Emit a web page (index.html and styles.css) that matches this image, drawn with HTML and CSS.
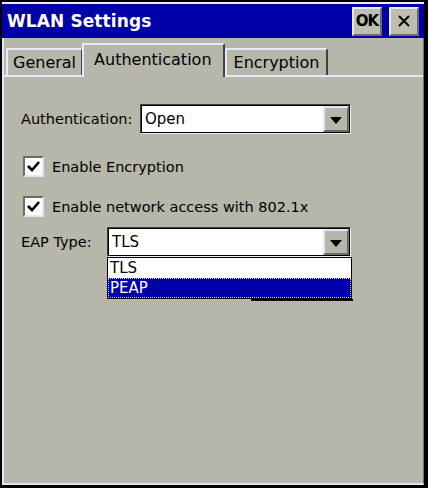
FILE: index.html
```html
<!DOCTYPE html>
<html>
<head>
<meta charset="utf-8">
<link rel="stylesheet" href="styles.css">
</head>
<body>
<div class="window">
  <div class="titlebar">
    <span class="title">WLAN Settings</span>
    <div class="tb-buttons">
      <div class="tb-btn ok">OK</div>
      <div class="tb-btn close">
        <svg width="12" height="12" viewBox="0 0 12 12"><path d="M1 1 L11 11 M11 1 L1 11" stroke="#000" stroke-width="2" fill="none"/></svg>
      </div>
    </div>
  </div>
  <div class="client">
    <div class="tabs">
      <div class="tab general">General</div>
      <div class="tab active">Authentication</div>
      <div class="tab">Encryption</div>
    </div>
    <div class="page">
      <div class="row auth-row">
        <span class="label auth-label">Authentication:</span>
        <div class="combo auth-combo">
          <div class="combo-inner">
            <span class="value">Open</span>
            <span class="drop"><svg width="12" height="7" viewBox="0 0 12 7"><path d="M0 0 H12 L6 7 Z" fill="#000"/></svg></span>
          </div>
        </div>
      </div>
      <div class="check-row first">
        <span class="checkbox"><svg width="17" height="17" viewBox="0 0 17 17"><path d="M3 8 L7 12 L14 4" stroke="#000" stroke-width="2.6" fill="none"/></svg></span>
        <span class="check-text">Enable Encryption</span>
      </div>
      <div class="check-row second">
        <span class="checkbox"><svg width="17" height="17" viewBox="0 0 17 17"><path d="M3 8 L7 12 L14 4" stroke="#000" stroke-width="2.6" fill="none"/></svg></span>
        <span class="check-text">Enable network access with 802.1x</span>
      </div>
      <div class="row eap-row">
        <span class="label eap-label">EAP Type:</span>
        <div class="combo eap-combo">
          <div class="combo-inner">
            <span class="value">TLS</span>
            <span class="drop"><svg width="12" height="7" viewBox="0 0 12 7"><path d="M0 0 H12 L6 7 Z" fill="#000"/></svg></span>
          </div>
          <div class="list">
            <div class="item">TLS</div>
            <div class="item sel">PEAP</div>
          </div>
          <div class="hidden-edge"></div>
        </div>
      </div>
    </div>
  </div>
</div>
</body>
</html>
```
FILE: styles.css
```css
html, body {
  margin: 0;
  padding: 0;
  background: #000;
}
body {
  font-family: "DejaVu Sans", "Liberation Sans", sans-serif;
  color: #000;
}
.window {
  width: 428px;
  height: 488px;
  box-sizing: border-box;
  border-style: solid;
  border-color: #000;
  border-width: 2px 4px 3px 2px;
  display: flex;
  flex-direction: column;
  background: #b6b6aa;
}
.titlebar {
  flex: none;
  height: 34px;
  border-top: 2px solid #ececf4;
  background: #0000a8;
  display: flex;
  align-items: center;
  justify-content: space-between;
  padding: 0 5px 0 5px;
}
.title {
  color: #fff;
  font-weight: bold;
  font-size: 17px;
  letter-spacing: 0.1px;
}
.tb-buttons {
  display: flex;
  gap: 7px;
}
.tb-btn {
  width: 30px;
  height: 29px;
  box-sizing: border-box;
  background: #bebeb2;
  border-style: solid;
  border-width: 2px;
  border-color: #e8e8f8 #6c6c64 #6c6c64 #e8e8f8;
  display: flex;
  align-items: center;
  justify-content: center;
}
.tb-btn.ok {
  font-weight: bold;
  font-size: 15px;
  letter-spacing: -1px;
}
.client {
  flex: 1;
  border-left: 2px solid #e4e4f4;
  border-bottom: 2px solid #e4e4f0;
  border-right: 1px solid #707068;
  display: flex;
  flex-direction: column;
}
.tabs {
  display: flex;
  align-items: flex-end;
  height: 33px;
  padding: 4px 0 0 2px;
  border-bottom: 2px solid #e8e8f8;
}
.tab {
  height: 27px;
  box-sizing: border-box;
  border-style: solid;
  border-width: 2px 2px 0 2px;
  border-color: #e8e8f8 #404040 #e8e8f8 #e8e8f8;
  border-radius: 2px 2px 0 0;
  font-size: 16px;
  padding: 0 7px;
  display: flex;
  align-items: center;
  background: #b6b6aa;
}
.tab.general {
  padding: 0 5px;
}
.tab.active {
  height: 34px;
  margin-bottom: -2px;
  padding: 0 11px 4px 10px;
  position: relative;
}
.tab + .tab.active {
  margin-left: -1px;
}
.page {
  padding-left: 17px;
  display: flex;
  flex-direction: column;
}
.row {
  display: flex;
  align-items: center;
}
.auth-row {
  margin-top: 27px;
}
.label {
  font-size: 14.5px;
  flex: none;
}
.auth-label {
  width: 119px;
}
.eap-label {
  width: 86px;
}
.combo {
  box-sizing: border-box;
  height: 30px;
  border: 1px solid;
  border-color: #404040 #ececf8 #ececf8 #404040;
  position: relative;
}
.auth-combo {
  width: 211px;
}
.eap-combo {
  width: 244px;
}
.combo-inner {
  height: 100%;
  box-sizing: border-box;
  border: 1px solid #000;
  background: #fff;
  display: flex;
  align-items: stretch;
}
.value {
  flex: 1;
  font-size: 15px;
  padding-left: 3px;
  display: flex;
  align-items: center;
}
.drop {
  width: 26px;
  box-sizing: border-box;
  background: #b6b6aa;
  border-style: solid;
  border-width: 2px;
  border-color: #e4e4f4 #6c6c64 #6c6c64 #e4e4f4;
  display: flex;
  align-items: center;
  justify-content: center;
  padding-top: 2px;
}
.check-row {
  display: flex;
  align-items: center;
  padding-left: 2px;
  gap: 8px;
}
.check-row.first {
  margin-top: 22px;
}
.check-row.second {
  margin-top: 19px;
}
.checkbox {
  width: 21px;
  height: 21px;
  box-sizing: border-box;
  background: #fff;
  border-style: solid;
  border-width: 2px;
  border-color: #6c6c64 #e4e4f4 #e4e4f4 #6c6c64;
  display: flex;
  align-items: center;
  justify-content: center;
}
.check-text {
  font-size: 14.5px;
}
.eap-row {
  margin-top: 10px;
}
.list {
  position: absolute;
  left: -1px;
  top: 29px;
  width: 245px;
  box-sizing: border-box;
  border: 1px solid #000;
  background: #fff;
  z-index: 2;
}
.item {
  height: 20px;
  box-sizing: border-box;
  font-size: 15px;
  padding-left: 2px;
  display: flex;
  align-items: center;
}
.item.sel {
  background: #0000a8;
  color: #fff;
  border: 1px dotted #d8d48c;
  padding-left: 1px;
}
.hidden-edge {
  position: absolute;
  left: 143px;
  top: 71px;
  width: 102px;
  height: 2px;
  background: #000;
  z-index: 1;
}
```
